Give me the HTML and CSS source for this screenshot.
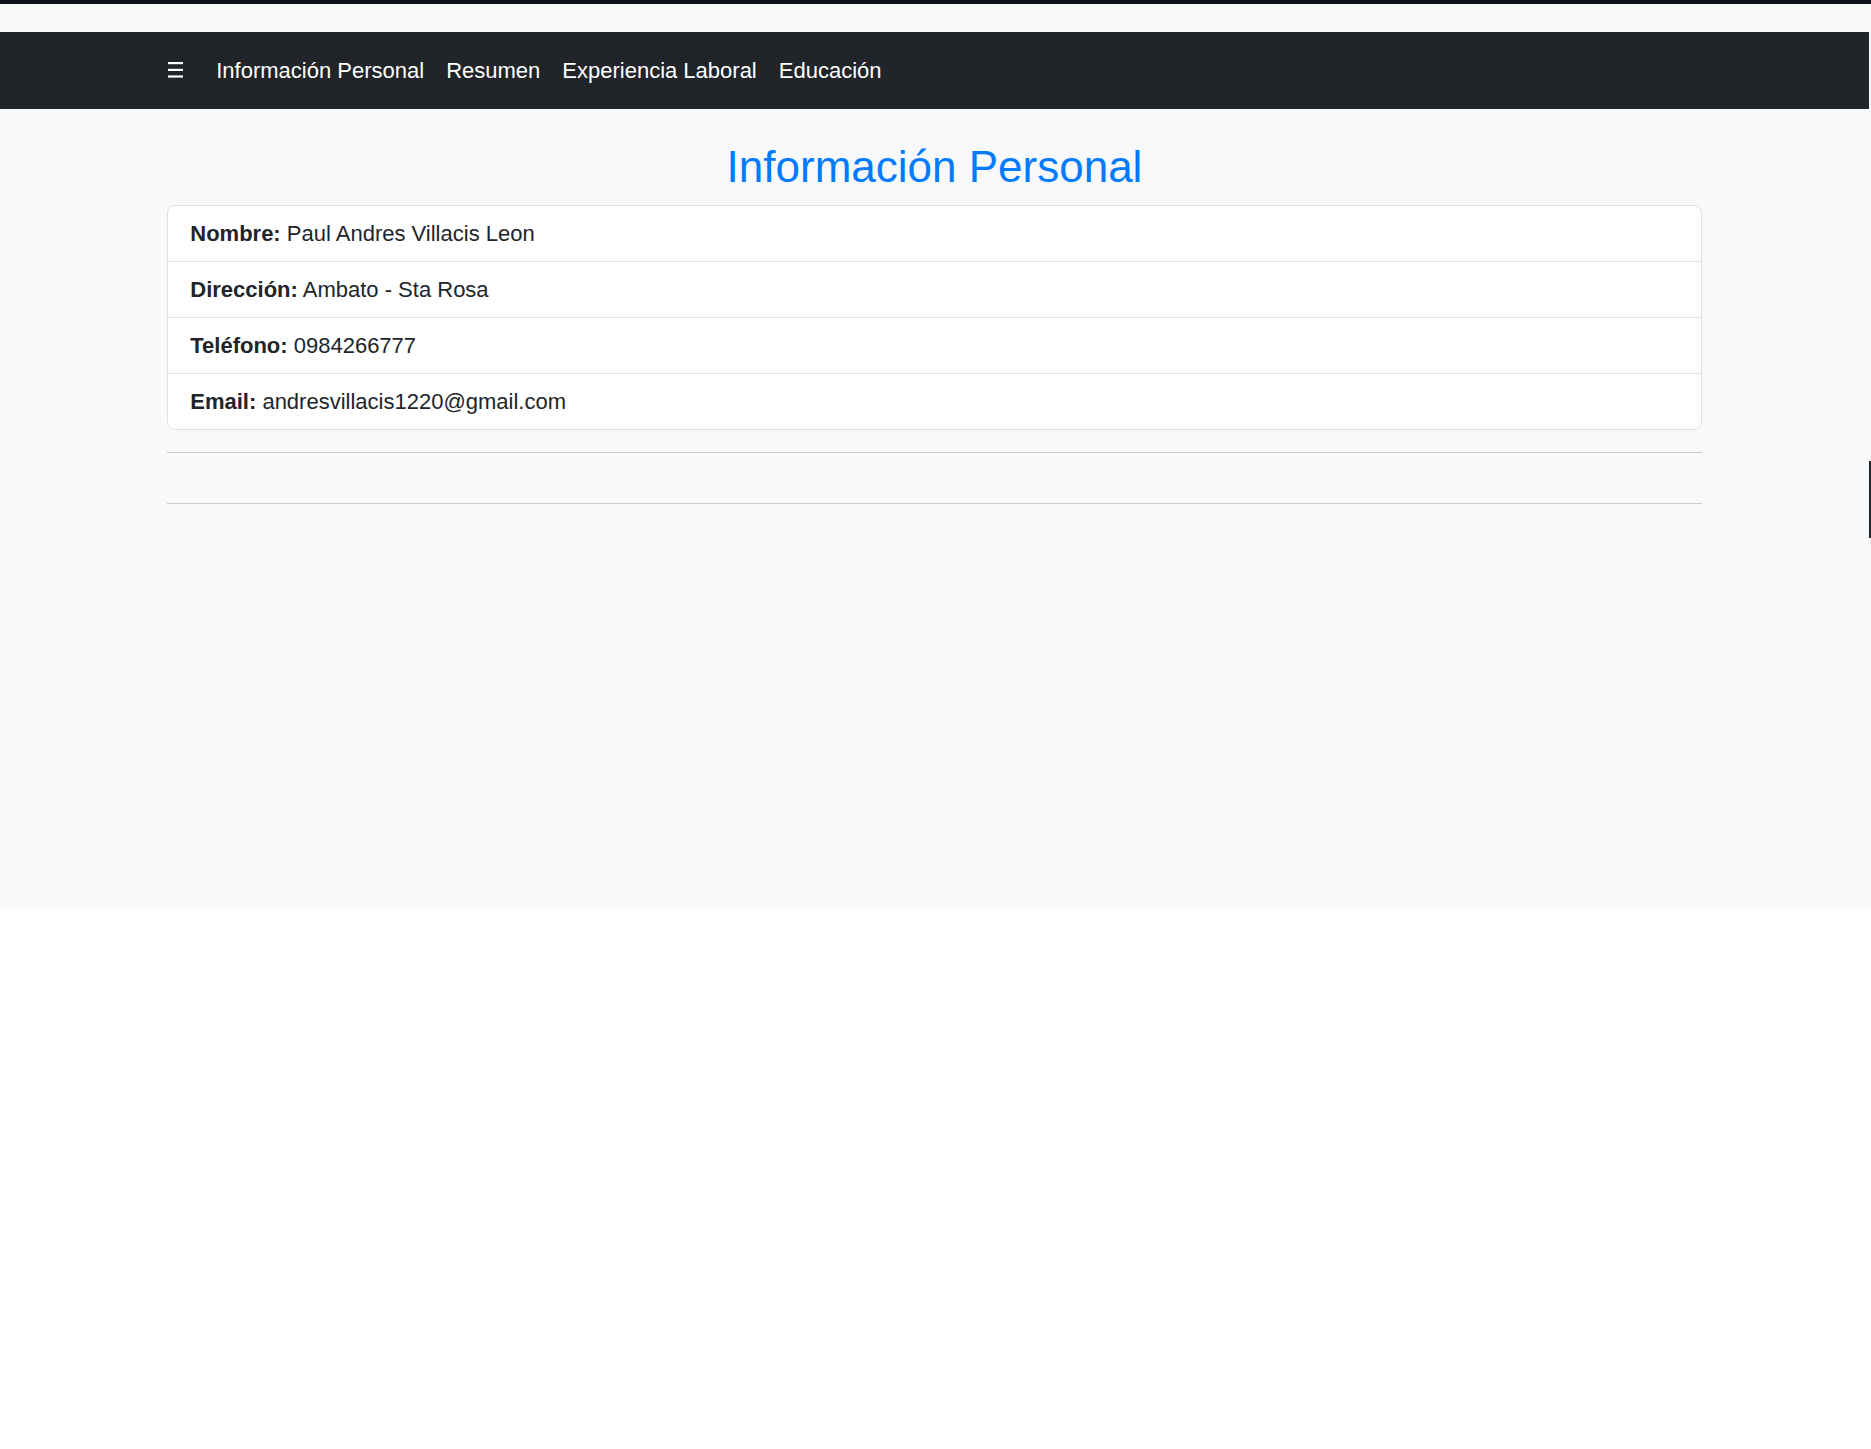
FILE: index.html
```html
<!DOCTYPE html>
<html lang="es">
<head>
<meta charset="utf-8">
<title>Información Personal</title>
<link rel="stylesheet" href="styles.css">
</head>
<body>
<div class="page">
  <div class="topbar"></div>
  <div class="frame">
    <nav class="navbar">
      <div class="nav-container">
        <a class="brand" href="#">
          <svg width="15" height="16" viewBox="0 0 15 16" aria-hidden="true">
            <rect x="0" y="0" width="15" height="2.2" fill="#fff"/>
            <rect x="0" y="6.8" width="15" height="2.2" fill="#fff"/>
            <rect x="0" y="13.4" width="15" height="2.2" fill="#fff"/>
          </svg>
        </a>
        <ul class="nav-links">
          <li><a href="#">Información Personal</a></li>
          <li><a href="#">Resumen</a></li>
          <li><a href="#">Experiencia Laboral</a></li>
          <li><a href="#">Educación</a></li>
        </ul>
      </div>
    </nav>
    <main class="container">
      <section class="section">
        <h2 class="title">Información Personal</h2>
        <ul class="list-group">
          <li class="list-item"><strong>Nombre:</strong> Paul Andres Villacis Leon</li>
          <li class="list-item"><strong>Dirección:</strong> Ambato - Sta Rosa</li>
          <li class="list-item"><strong>Teléfono:</strong> 0984266777</li>
          <li class="list-item"><strong>Email:</strong> andresvillacis1220@gmail.com</li>
        </ul>
      </section>
      <hr class="divider">
      <div class="spacer"></div>
      <hr class="divider">
    </main>
  </div>
  <div class="scroll-thumb"></div>
</div>
</body>
</html>
```
FILE: styles.css
```css
html, body {
  margin: 0;
  padding: 0;
  background: #ffffff;
}

body {
  font-family: "Liberation Sans", Arial, sans-serif;
  font-size: 22px;
  line-height: 1.5;
  color: #212529;
}

.page {
  position: relative;
  height: 908px;
  background: #f8f9fa;
  overflow: hidden;
}

.topbar {
  height: 4px;
  background: #0d111a;
}

.frame {
  margin-top: 28px;
  margin-right: 2px;
}

.navbar {
  background: #212529;
  padding: 11px 0;
}

.nav-container {
  max-width: 1534.5px;
  margin: 0 auto;
  padding: 0 16.5px;
  display: flex;
  align-items: center;
  height: 55px;
}

.brand {
  display: flex;
  align-items: center;
  margin-left: 1px;
  margin-right: 22px;
  height: 55px;
}

.brand svg {
  display: block;
  margin-top: -1px;
}

.nav-links {
  list-style: none;
  margin: 0;
  padding: 0;
  display: flex;
}

.nav-links a {
  display: block;
  padding: 11px 11px;
  color: #ffffff;
  text-decoration: none;
  line-height: 33px;
}

.container {
  max-width: 1534.5px;
  margin: 0 auto;
  padding: 32px 16.5px 0;
}

.title {
  margin: 0 0 11px;
  text-align: center;
  color: #007bff;
  font-size: 44px;
  font-weight: 400;
  line-height: 1.2;
}

.list-group {
  list-style: none;
  margin: 0;
  padding: 0;
  background: #ffffff;
  border: 1px solid #dee2e6;
  border-radius: 8px;
}

.list-item {
  padding: 11px 22px;
  line-height: 33px;
  border-top: 1px solid #dee2e6;
}

.list-item:first-child {
  border-top: none;
}

.list-item strong {
  font-weight: 700;
}

.divider {
  margin: 22px 0 0;
  border: 0;
  border-top: 1px solid #c8c9cb;
  height: 0;
}

.spacer {
  height: 28px;
}

.scroll-thumb {
  position: absolute;
  right: 0;
  top: 461px;
  width: 2px;
  height: 77px;
  background: #212529;
}
```
